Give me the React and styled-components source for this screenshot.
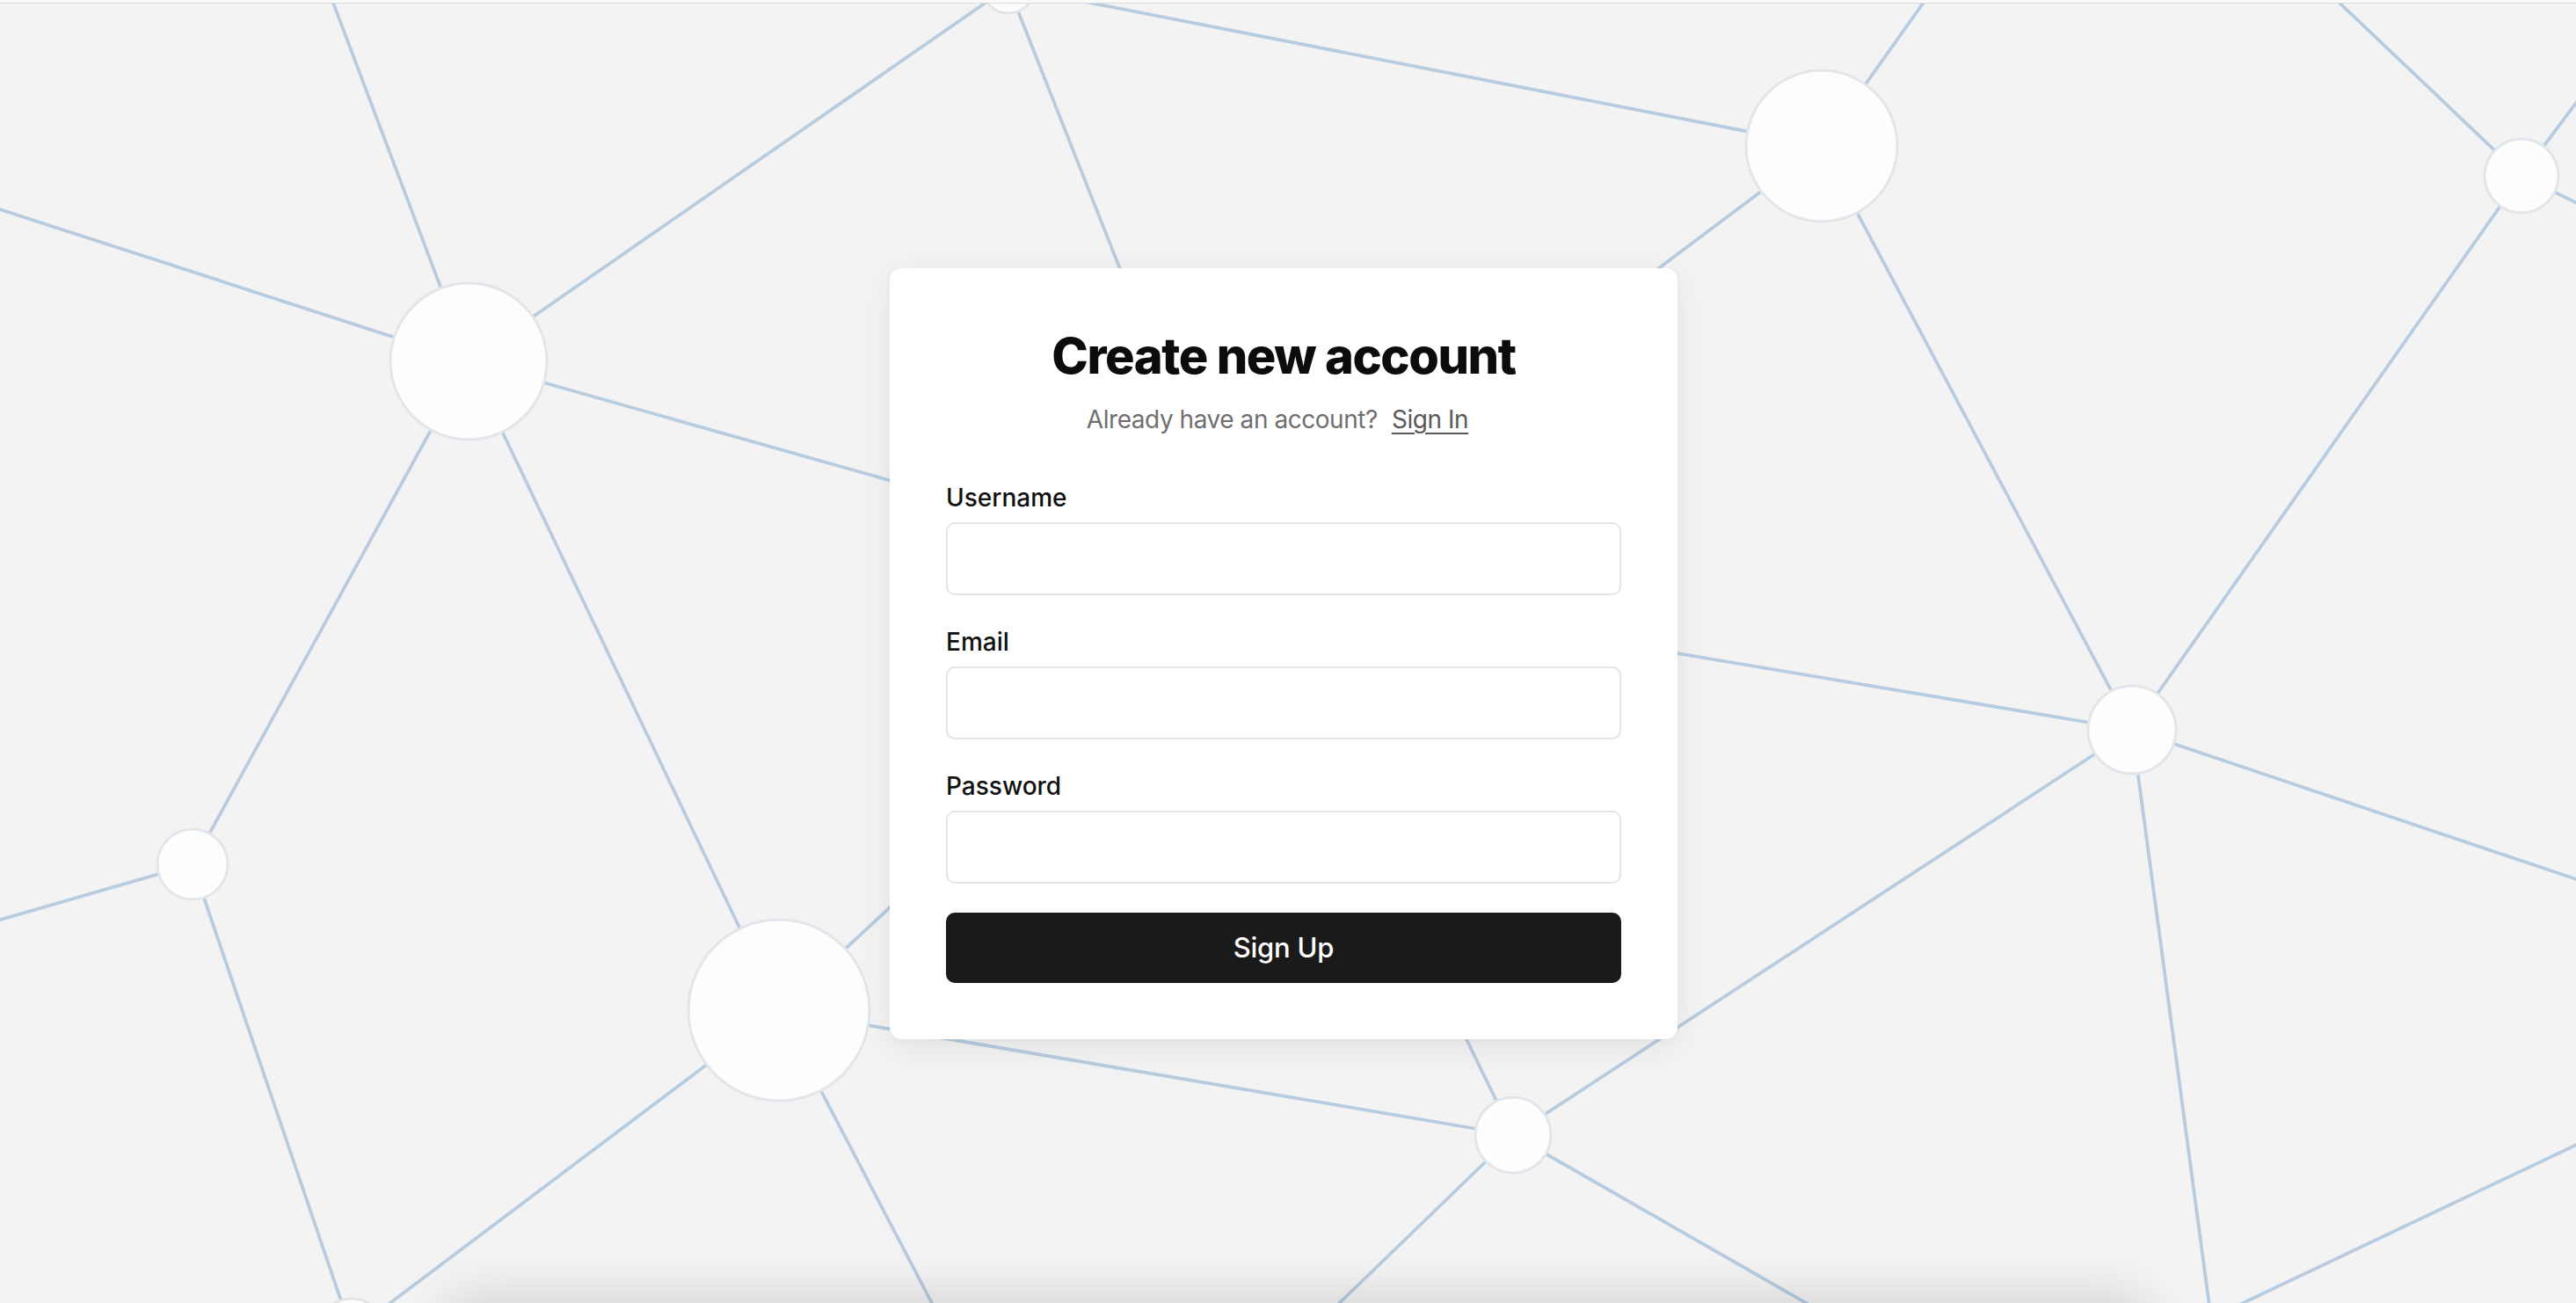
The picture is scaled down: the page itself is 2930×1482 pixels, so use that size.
import React from "react";
import styled, { createGlobalStyle } from "styled-components";

const GlobalStyle = createGlobalStyle`
  html, body {
    margin: 0;
    padding: 0;
    background: #f3f3f3;
    overflow: hidden;
  }
  body {
    font-family: "Inter", "Liberation Sans", sans-serif;
    -webkit-font-smoothing: antialiased;
  }
  * { box-sizing: border-box; }
`;

const Page = styled.div`
  position: relative;
  width: 100vw;
  height: 100vh;
  display: flex;
  flex-direction: column;
  background: #f3f3f3;
  overflow: hidden;
`;

const TopBar = styled.div`
  position: relative;
  z-index: 3;
  flex: none;
  height: 4px;
  background: #fafafa;
  border-bottom: 1px solid #dcdcdc;
`;

const Backdrop = styled.svg`
  position: absolute;
  inset: 0;
  width: 100%;
  height: 100%;
  z-index: 0;
`;

const Hero = styled.main`
  position: relative;
  z-index: 1;
  flex: 1;
  display: flex;
  align-items: center;
  justify-content: center;
  padding-right: 10px;
`;

const FoldShadow = styled.div`
  position: absolute;
  z-index: 1;
  left: 520px;
  right: 500px;
  bottom: -200px;
  height: 190px;
  background: #f3f3f3;
  box-shadow: 0 0 60px 8px rgba(0, 0, 0, 0.18);
`;

const Card = styled.section`
  width: 896px;
  padding: 64px;
  background: #ffffff;
  border-radius: 14px;
  box-shadow: 0 10px 40px rgba(0, 0, 0, 0.07), 0 2px 6px rgba(0, 0, 0, 0.03);
  display: flex;
  flex-direction: column;
`;

const Title = styled.h1`
  margin: 0;
  text-align: center;
  font-size: 56px;
  line-height: 72px;
  font-weight: 800;
  letter-spacing: -1.45px;
  color: #0c0c0c;
`;

const Subtitle = styled.p`
  margin: 16px 0 0;
  padding-right: 14px;
  text-align: center;
  font-size: 28px;
  line-height: 40px;
  color: #6f6f6f;
  letter-spacing: -0.45px;
`;

const SignInLink = styled.a`
  margin-left: 16px;
  color: #595959;
  text-decoration: underline;
  text-underline-offset: 5px;
  text-decoration-thickness: 2px;
  cursor: pointer;
`;

const Form = styled.form`
  margin-top: 49px;
  display: flex;
  flex-direction: column;
  gap: 33px;
`;

const Field = styled.div`
  display: flex;
  flex-direction: column;
  gap: 8px;
`;

const Label = styled.label`
  font-size: 28px;
  line-height: 40px;
  font-weight: 500;
  color: #111111;
`;

const Input = styled.input`
  height: 83px;
  width: 100%;
  padding: 0 20px;
  border: 2px solid #e4e4e4;
  border-radius: 10px;
  background: #ffffff;
  font: inherit;
  font-size: 28px;
  outline: none;
`;

const SubmitButton = styled.button`
  height: 80px;
  width: 100%;
  border: none;
  border-radius: 10px;
  background: #1a1a1a;
  color: #ffffff;
  font-family: inherit;
  font-size: 31px;
  font-weight: 500;
  letter-spacing: -0.2px;
  cursor: pointer;
`;

const nodes = {
  A: [1147, -15, 30],
  B: [2072, 166, 86],
  C: [2868, 200, 42],
  D: [533, 411, 89],
  E: [219, 983, 40],
  F: [886, 1149, 103],
  G: [2425, 830, 50],
  H: [1721, 1291, 43],
  I: [400, 1515, 38],
  K: [1414, 660, 45],
};

const edges = [
  [[374, -10], "D"],
  [[-10, 235], "D"],
  ["D", "A"],
  ["A", "K"],
  ["A", "B"],
  ["B", [2197, -10]],
  ["B", "K"],
  ["B", "G"],
  [[2647, -10], "C"],
  ["C", [2960, 77]],
  ["C", [2960, 245]],
  ["C", "G"],
  ["D", "K"],
  ["D", "E"],
  ["D", "F"],
  ["E", [-10, 1049]],
  ["E", "I"],
  ["F", "K"],
  ["F", "I"],
  ["F", [1085, 1530]],
  ["F", "H"],
  ["K", "H"],
  ["H", "G"],
  ["H", [1474, 1530]],
  ["H", [2138, 1530]],
  ["K", "G"],
  ["G", [2960, 1010]],
  ["G", [2519, 1530]],
  [[2526, 1494], [2960, 1288]],
];

const pt = (p) => (typeof p === "string" ? nodes[p] : p);

function NetworkBackdrop() {
  return (
    <Backdrop viewBox="0 0 2930 1482" preserveAspectRatio="none" aria-hidden="true">
      <defs>
        <filter id="soft" x="-5%" y="-5%" width="110%" height="110%">
          <feGaussianBlur stdDeviation="0.6" />
        </filter>
      </defs>
      <g filter="url(#soft)">
        {edges.map(([a, b], i) => {
          const [x1, y1] = pt(a);
          const [x2, y2] = pt(b);
          return (
            <line
              key={i}
              x1={x1}
              y1={y1}
              x2={x2}
              y2={y2}
              stroke="#b8cce0"
              strokeWidth="3.8"
              strokeLinecap="round"
            />
          );
        })}
        {Object.entries(nodes).map(([k, [cx, cy, r]]) => (
          <circle
            key={k}
            cx={cx}
            cy={cy}
            r={r}
            fill="#fdfdfd"
            stroke="#e2e6eb"
            strokeWidth="3"
          />
        ))}
      </g>
    </Backdrop>
  );
}

export default function App() {
  return (
    <>
      <GlobalStyle />
      <Page>
        <NetworkBackdrop />
        <TopBar />
        <Hero>
          <Card>
            <Title>Create new account</Title>
            <Subtitle>
              Already have an account?
              <SignInLink>Sign In</SignInLink>
            </Subtitle>
            <Form onSubmit={(e) => e.preventDefault()}>
              <Field>
                <Label htmlFor="username">Username</Label>
                <Input id="username" type="text" />
              </Field>
              <Field>
                <Label htmlFor="email">Email</Label>
                <Input id="email" type="email" />
              </Field>
              <Field>
                <Label htmlFor="password">Password</Label>
                <Input id="password" type="password" />
              </Field>
              <SubmitButton type="submit">Sign Up</SubmitButton>
            </Form>
          </Card>
          <FoldShadow />
        </Hero>
      </Page>
    </>
  );
}
